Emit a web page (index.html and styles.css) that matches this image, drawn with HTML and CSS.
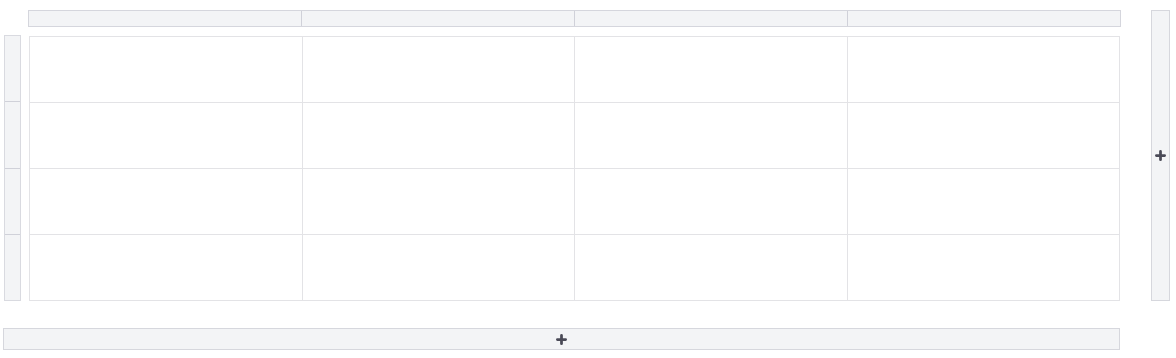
FILE: index.html
```html
<!DOCTYPE html>
<html>
<head>
<meta charset="utf-8">
<link rel="stylesheet" href="styles.css">
</head>
<body>
<div class="editor">
  <div class="col-header">
    <div class="col-seg"></div>
    <div class="col-seg"></div>
    <div class="col-seg"></div>
    <div class="col-seg"></div>
  </div>
  <div class="row-header">
    <div class="row-seg"></div>
    <div class="row-seg"></div>
    <div class="row-seg"></div>
    <div class="row-seg"></div>
  </div>
  <div class="table">
    <div class="cell"></div><div class="cell"></div><div class="cell"></div><div class="cell"></div>
    <div class="cell"></div><div class="cell"></div><div class="cell"></div><div class="cell"></div>
    <div class="cell"></div><div class="cell"></div><div class="cell"></div><div class="cell"></div>
    <div class="cell"></div><div class="cell"></div><div class="cell"></div><div class="cell"></div>
  </div>
  <button class="add-col" type="button" aria-label="Add column">
    <svg class="plus" viewBox="0 0 12 12" width="11" height="11"><path d="M6 1.5v9M1.5 6h9" stroke="#4a4a57" stroke-width="3" stroke-linecap="round" fill="none"/></svg>
  </button>
  <button class="add-row" type="button" aria-label="Add row">
    <svg class="plus" viewBox="0 0 12 12" width="11" height="11"><path d="M6 1.5v9M1.5 6h9" stroke="#4a4a57" stroke-width="3" stroke-linecap="round" fill="none"/></svg>
  </button>
</div>
</body>
</html>
```
FILE: styles.css
```css
html, body {
  margin: 0;
  padding: 0;
  background: #ffffff;
  font-family: "Liberation Sans", Arial, sans-serif;
}

.editor {
  display: grid;
  padding: 10px 0 0 3px;
  grid-template-columns: 25px 1093px 30px 19px;
  grid-template-rows: 17px 8px 266px 27px 22px;
}

.col-header {
  grid-column: 2;
  grid-row: 1;
  display: flex;
  background: #f3f4f6;
  border: 1px solid #d5d6dd;
  box-sizing: border-box;
}

.col-seg {
  flex: 1;
  border-left: 1px solid #d0d1d9;
}
.col-seg:first-child { border-left: none; }

.row-header {
  grid-column: 1;
  grid-row: 3;
  margin-left: 1px;
  width: 17px;
  display: flex;
  flex-direction: column;
  background: #f3f4f6;
  border: 1px solid #d9dae0;
  box-sizing: border-box;
}

.row-seg {
  flex: 1;
  border-top: 1px solid #d0d1d9;
}
.row-seg:first-child { border-top: none; }

.table {
  grid-column: 2;
  grid-row: 3;
  margin: 1px 1px 0 1px;
  display: grid;
  grid-template-columns: repeat(4, 1fr);
  grid-template-rows: repeat(4, 1fr);
  border-top: 1px solid #e3e3e6;
  border-left: 1px solid #e3e3e6;
  box-sizing: border-box;
}

.cell {
  border-right: 1px solid #e3e3e6;
  border-bottom: 1px solid #e3e3e6;
}

.add-col,
.add-row {
  margin: 0;
  padding: 0;
  background: #f3f4f6;
  border: 1px solid #d6d7dd;
  box-sizing: border-box;
  display: flex;
  align-items: center;
  justify-content: center;
  cursor: pointer;
}

.add-col {
  grid-column: 4;
  grid-row: 1 / 4;
}

.add-row {
  grid-column: 1 / 3;
  grid-row: 5;
  width: 1117px;
}

.plus { display: block; }
```
